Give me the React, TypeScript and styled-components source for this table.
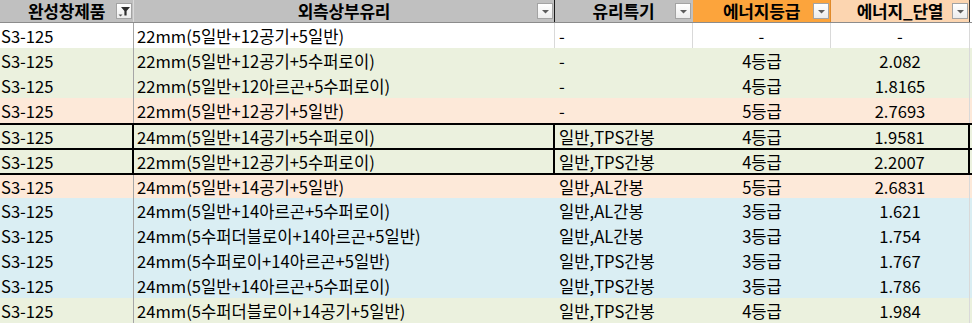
import styled, { createGlobalStyle } from "styled-components";

const GlobalStyle = createGlobalStyle`
  html, body {
    margin: 0;
    padding: 0;
    background: #ffffff;
  }
  body {
    font-family: "Noto Sans CJK KR", "Noto Sans", sans-serif;
    color: #000;
  }
`;

const COLS = "134px 421px 138px 138px 139px";

const Sheet = styled.div`
  width: 972px;
  display: flex;
  flex-direction: column;
`;

const HeaderRow = styled.div`
  display: grid;
  grid-template-columns: ${COLS};
  height: 23px;
  box-sizing: border-box;
  border-bottom: 1px solid #8c8c8c;
`;

const HeaderCell = styled.div<{ $bg: string; $edge?: string }>`
  display: grid;
  align-items: center;
  background: ${(p) => p.$bg};
  border-right: 1px solid ${(p) => p.$edge || "#d9d9d9"};
  font-size: 17px;
  font-weight: 700;
  line-height: 20px;
  letter-spacing: -0.2px;
  box-sizing: border-box;
`;

const HeaderText = styled.span`
  grid-area: 1 / 1;
  justify-self: center;
  white-space: nowrap;
`;

const FilterButton = styled.span`
  grid-area: 1 / 1;
  justify-self: end;
  width: 16px;
  height: 16px;
  margin-right: 1px;
  box-sizing: border-box;
  border: 1px solid #a3a3a3;
  background: linear-gradient(#ffffff, #ececec);
  display: flex;
`;

const Row = styled.div<{ $bg: string; $rule?: boolean }>`
  display: grid;
  grid-template-columns: ${COLS};
  height: 25px;
  box-sizing: border-box;
  background: ${(p) => p.$bg};
  border-top: ${(p) => (p.$rule ? "2px solid #000" : "none")};
`;

const Cell = styled.div<{
  $align?: "left" | "center";
  $line?: string;
  $boxed?: boolean;
  $pad?: number;
}>`
  display: flex;
  align-items: center;
  justify-content: ${(p) => (p.$align === "center" ? "center" : "flex-start")};
  padding: 0 3px 0 ${(p) => (p.$pad ?? 3)}px;
  font-size: 16.6px;
  line-height: 20px;
  white-space: nowrap;
  overflow: hidden;
  box-sizing: border-box;
  border-right: ${(p) =>
    p.$boxed ? "2px solid #000" : p.$line ? `1px solid ${p.$line}` : "none"};
`;

const FunnelIcon = () => (
  <svg width="14" height="14" viewBox="0 0 14 14">
    <polygon points="4,3 13,3 9.6,7 9.6,11.5 7.4,11.5 7.4,7" fill="#2f2f2f" />
    <polygon points="1.5,10.5 5.5,10.5 3.5,12.5" fill="#555" />
  </svg>
);

const ArrowIcon = () => (
  <svg width="14" height="14" viewBox="0 0 14 14">
    <polygon points="4,6 11,6 7.5,9.5" fill="#5c5c5c" />
  </svg>
);

type Item = {
  code: string;
  glass: string;
  spec: string;
  grade: string;
  heat: string;
  bg: string;
  boxed?: boolean;
  rule?: boolean;
};

const WHITE = "#ffffff";
const GREEN = "#ebf1de";
const PINK = "#fde9d9";
const BLUE = "#daeef3";

const rows: Item[] = [
  { code: "S3-125", glass: "22mm(5일반+12공기+5일반)", spec: "-", grade: "-", heat: "-", bg: WHITE },
  { code: "S3-125", glass: "22mm(5일반+12공기+5수퍼로이)", spec: "-", grade: "4등급", heat: "2.082", bg: GREEN },
  { code: "S3-125", glass: "22mm(5일반+12아르곤+5수퍼로이)", spec: "-", grade: "4등급", heat: "1.8165", bg: GREEN },
  { code: "S3-125", glass: "22mm(5일반+12공기+5일반)", spec: "-", grade: "5등급", heat: "2.7693", bg: PINK },
  { code: "S3-125", glass: "24mm(5일반+14공기+5수퍼로이)", spec: "일반,TPS간봉", grade: "4등급", heat: "1.9581", bg: GREEN, boxed: true, rule: true },
  { code: "S3-125", glass: "22mm(5일반+12공기+5수퍼로이)", spec: "일반,TPS간봉", grade: "4등급", heat: "2.2007", bg: GREEN, boxed: true, rule: true },
  { code: "S3-125", glass: "24mm(5일반+14공기+5일반)", spec: "일반,AL간봉", grade: "5등급", heat: "2.6831", bg: PINK, rule: true },
  { code: "S3-125", glass: "24mm(5일반+14아르곤+5수퍼로이)", spec: "일반,AL간봉", grade: "3등급", heat: "1.621", bg: BLUE },
  { code: "S3-125", glass: "24mm(5수퍼더블로이+14아르곤+5일반)", spec: "일반,AL간봉", grade: "3등급", heat: "1.754", bg: BLUE },
  { code: "S3-125", glass: "24mm(5수퍼로이+14아르곤+5일반)", spec: "일반,TPS간봉", grade: "3등급", heat: "1.767", bg: BLUE },
  { code: "S3-125", glass: "24mm(5일반+14아르곤+5수퍼로이)", spec: "일반,TPS간봉", grade: "3등급", heat: "1.786", bg: BLUE },
  { code: "S3-125", glass: "24mm(5수퍼더블로이+14공기+5일반)", spec: "일반,TPS간봉", grade: "4등급", heat: "1.984", bg: GREEN },
];

export default function App() {
  return (
    <>
      <GlobalStyle />
      <Sheet>
        <HeaderRow>
          <HeaderCell $bg="#c0c0c0">
            <HeaderText>완성창제품</HeaderText>
            <FilterButton>
              <FunnelIcon />
            </FilterButton>
          </HeaderCell>
          <HeaderCell $bg="#c0c0c0" $edge="#1a1a1a">
            <HeaderText>외측상부유리</HeaderText>
            <FilterButton>
              <ArrowIcon />
            </FilterButton>
          </HeaderCell>
          <HeaderCell $bg="#c0c0c0" $edge="#c0c0c0">
            <HeaderText>유리특기</HeaderText>
            <FilterButton>
              <ArrowIcon />
            </FilterButton>
          </HeaderCell>
          <HeaderCell $bg="#fca43c" $edge="#e08a2a">
            <HeaderText>에너지등급</HeaderText>
            <FilterButton>
              <ArrowIcon />
            </FilterButton>
          </HeaderCell>
          <HeaderCell $bg="#fcd5b0" $edge="#3a3a3a">
            <HeaderText>에너지_단열</HeaderText>
            <FilterButton>
              <ArrowIcon />
            </FilterButton>
          </HeaderCell>
        </HeaderRow>
        {rows.map((r, i) => {
          const grid = r.bg === WHITE ? "#d9d9d9" : undefined;
          return (
            <Row key={i} $bg={r.bg} $rule={r.rule}>
              <Cell $boxed={r.boxed} $line="#a6a6a6" $pad={1}>
                {r.code}
              </Cell>
              <Cell $boxed={r.boxed} $line={grid}>
                {r.glass}
              </Cell>
              <Cell $line={grid} $pad={4}>
                {r.spec}
              </Cell>
              <Cell $align="center" $line={grid}>
                {r.grade}
              </Cell>
              <Cell $align="center" $boxed={r.boxed} $line="#d9d9d9">
                {r.heat}
              </Cell>
            </Row>
          );
        })}
      </Sheet>
    </>
  );
}
